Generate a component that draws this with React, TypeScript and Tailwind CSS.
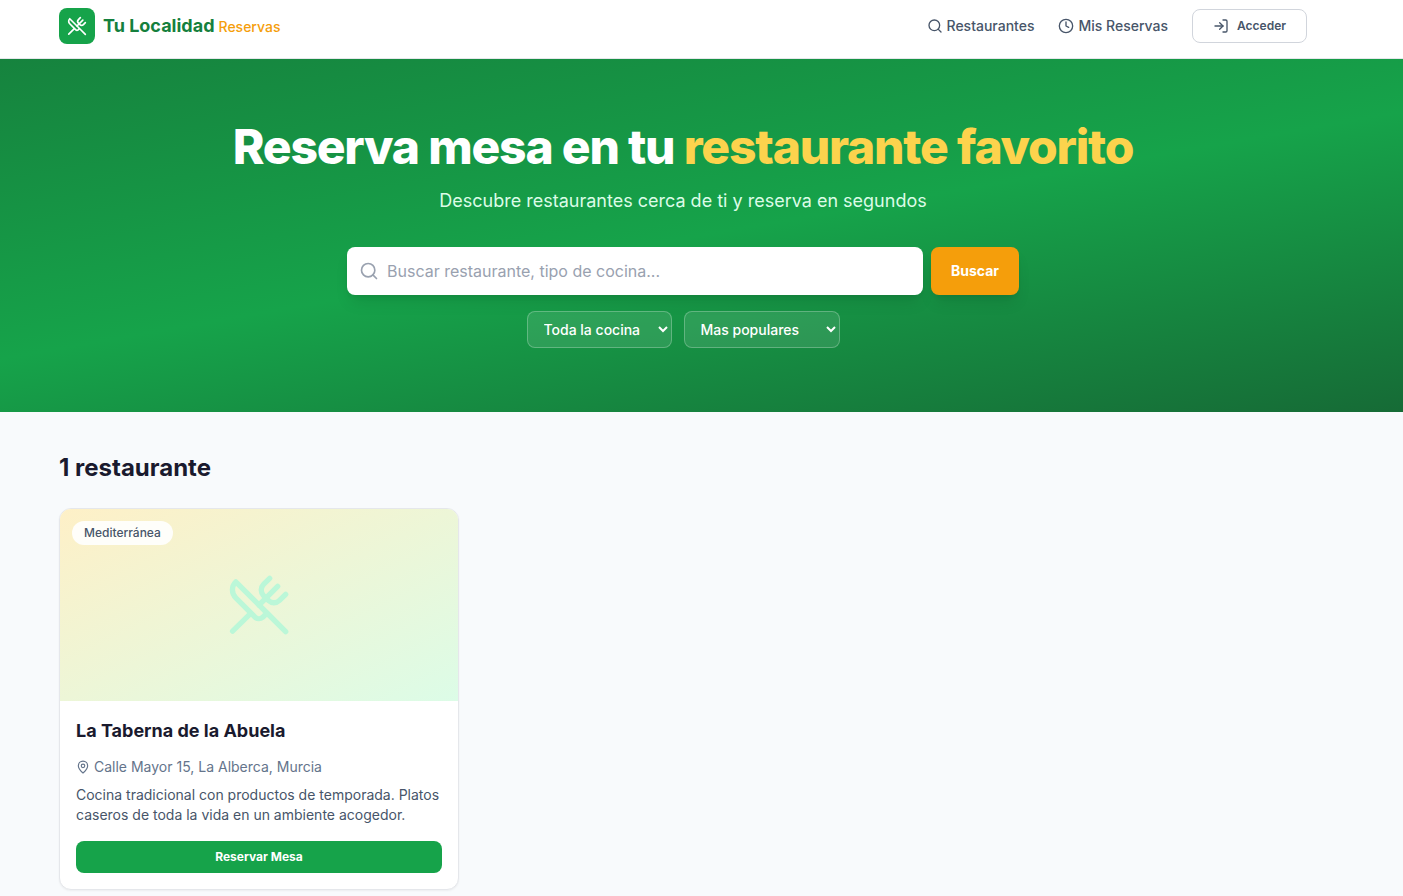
import React, { useState } from "react";
import { Clock, LogIn, MapPin, Search, UtensilsCrossed } from "lucide-react";

interface Restaurant {
  id: number;
  name: string;
  cuisine: string;
  address: string;
  description: string;
}

const restaurants: Restaurant[] = [
  {
    id: 1,
    name: "La Taberna de la Abuela",
    cuisine: "Mediterránea",
    address: "Calle Mayor 15, La Alberca, Murcia",
    description:
      "Cocina tradicional con productos de temporada. Platos caseros de toda la vida en un ambiente acogedor.",
  },
];

const container = "mx-auto w-full max-w-7xl px-4";
const selectClass =
  "h-[37px] rounded-lg border border-white/25 bg-white/10 pr-3.5 pl-3 text-sm font-medium text-white outline-none";

function Header() {
  return (
    <header className="border-b border-gray-200 bg-white pt-2 pb-3.5 pr-[37px]">
      <div className={`${container} flex items-center justify-between`}>
        <a href="#" className="flex items-center gap-2">
          <span className="flex h-9 w-9 items-center justify-center rounded-lg bg-[#16a34a]">
            <UtensilsCrossed className="h-5 w-5 text-white" />
          </span>
          <span className="flex items-baseline gap-1">
            <span className="text-lg font-bold text-[#15803d]">Tu Localidad</span>
            <span className="text-sm font-medium text-[#f59e0b]">Reservas</span>
          </span>
        </a>

        <nav className="flex items-center gap-6 text-sm font-medium text-[#475569]">
          <a href="#restaurantes" className="flex items-center gap-1">
            <Search className="h-4 w-4" />
            Restaurantes
          </a>
          <a href="#reservas" className="flex items-center gap-1">
            <Clock className="h-4 w-4" />
            Mis Reservas
          </a>
          <button
            type="button"
            className="flex h-[34px] items-center gap-2 rounded-lg border border-gray-300 px-5 text-xs font-semibold"
          >
            <LogIn className="h-4 w-4" />
            Acceder
          </button>
        </nav>
      </div>
    </header>
  );
}

function Hero() {
  const [query, setQuery] = useState("");

  return (
    <section className="bg-[linear-gradient(170deg,#16833e_0%,#16a34a_50%,#166b36_100%)] py-16 pr-[37px]">
      <div className={`${container} flex flex-col items-center text-center`}>
        <h1 className="mb-4 text-5xl font-extrabold tracking-tight text-white">
          Reserva mesa en tu <span className="text-[#fcd34d]">restaurante favorito</span>
        </h1>
        <p className="mb-8 text-lg text-[#dcfce7]">
          Descubre restaurantes cerca de ti y reserva en segundos
        </p>

        <form className="flex w-full max-w-2xl gap-2" onSubmit={(e) => e.preventDefault()}>
          <div className="relative flex-1">
            <Search className="absolute top-1/2 left-3 h-5 w-5 -translate-y-1/2 text-gray-400" />
            <input
              type="text"
              aria-label="Buscar restaurante"
              placeholder="Buscar restaurante, tipo de cocina..."
              value={query}
              onChange={(e) => setQuery(e.target.value)}
              className="h-12 w-full rounded-lg bg-white pr-4 pl-10 text-base text-gray-900 shadow-lg outline-none placeholder:text-gray-400"
            />
          </div>
          <button
            type="submit"
            className="h-12 rounded-lg bg-[#f59e0b] px-5 text-sm font-bold text-white shadow-lg"
          >
            Buscar
          </button>
        </form>

        <div className="mt-4 flex justify-center gap-3">
          <select aria-label="Cocina" className={selectClass}>
            <option className="text-black">Toda la cocina</option>
            <option className="text-black">Mediterránea</option>
          </select>
          <select aria-label="Ordenar" className={selectClass}>
            <option className="text-black">Mas populares</option>
            <option className="text-black">Mejor valorados</option>
          </select>
        </div>
      </div>
    </section>
  );
}

function RestaurantCard({ restaurant }: { restaurant: Restaurant }) {
  return (
    <article className="overflow-hidden rounded-xl border border-gray-200 bg-white shadow-xs">
      <div className="relative flex h-48 items-center justify-center bg-[linear-gradient(to_bottom_right,#fef0c7,#dcfce7)]">
        <UtensilsCrossed className="h-16 w-16 text-[#bbf7d8]" />
        <span className="absolute top-3 left-3 rounded-full bg-white/90 px-3 py-1 text-xs font-medium text-[#475569]">
          {restaurant.cuisine}
        </span>
      </div>
      <div className="p-4">
        <h3 className="mb-3 text-lg font-bold text-[#1a1a2e]">{restaurant.name}</h3>
        <p className="mb-2 flex items-center gap-1 text-sm text-[#64748b]">
          <MapPin className="h-3.5 w-3.5" />
          {restaurant.address}
        </p>
        <p className="mb-4 text-sm text-[#475569]">{restaurant.description}</p>
        <button
          type="button"
          className="h-8 w-full rounded-lg bg-[#16a34a] text-xs font-bold text-white"
        >
          Reservar Mesa
        </button>
      </div>
    </article>
  );
}

export default function App() {
  return (
    <div className="min-h-screen bg-[#f8fafc] font-['Inter',sans-serif]">
      <Header />
      <Hero />
      <main className="pt-10 pr-[37px]">
        <div className={container}>
          <h2 className="mb-6 text-2xl font-bold text-[#1a1a2e]">
            {restaurants.length} restaurante
          </h2>
          <div className="grid grid-cols-1 gap-6 md:grid-cols-2 lg:grid-cols-3">
            {restaurants.map((r) => (
              <RestaurantCard key={r.id} restaurant={r} />
            ))}
          </div>
        </div>
      </main>
    </div>
  );
}
